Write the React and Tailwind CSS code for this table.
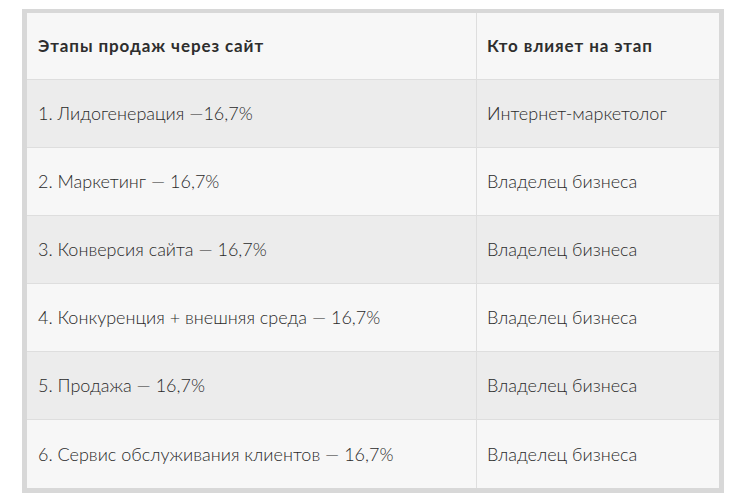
import React from "react";

const rows = [
  ["1. Лидогенерация —16,7%", "Интернет-маркетолог"],
  ["2. Маркетинг — 16,7%", "Владелец бизнеса"],
  ["3. Конверсия сайта — 16,7%", "Владелец бизнеса"],
  ["4. Конкуренция + внешняя среда — 16,7%", "Владелец бизнеса"],
  ["5. Продажа — 16,7%", "Владелец бизнеса"],
  ["6. Сервис обслуживания клиентов — 16,7%", "Владелец бизнеса"],
];

export default function App() {
  return (
    <div className="w-[744px] h-[504px] bg-white pt-[9px] pl-[22px]" style={{ fontFamily: "Lato, 'Noto Sans', sans-serif" }}>
      <div className="w-[702px] border-[5px] border-[#d8d8d8] border-t-4">
        <div className="grid grid-cols-[450px_1fr] h-[67px] bg-[#f7f7f7] border-b border-[#dedede] text-[17px] tracking-[0.9px] font-bold text-[#2e2e2e]">
          <div className="flex items-center pl-[11px] border-r border-[#dedede]">Этапы продаж через сайт</div>
          <div className="flex items-center pl-[10px]">Кто влияет на этап</div>
        </div>
        {rows.map(([a, b], i) => (
          <div
            key={i}
            className={
              "grid grid-cols-[450px_1fr] h-[68px] text-[18px] font-light text-[#2a2a2a] " +
              (i % 2 === 0 ? "bg-[#ececec]" : "bg-[#f7f7f7]") +
              (i < rows.length - 1 ? " border-b border-[#dedede]" : "")
            }
          >
            <div className="flex items-center pl-[11px] border-r border-[#dedede]">{a}</div>
            <div className="flex items-center pl-[10px]">{b}</div>
          </div>
        ))}
      </div>
    </div>
  );
}
